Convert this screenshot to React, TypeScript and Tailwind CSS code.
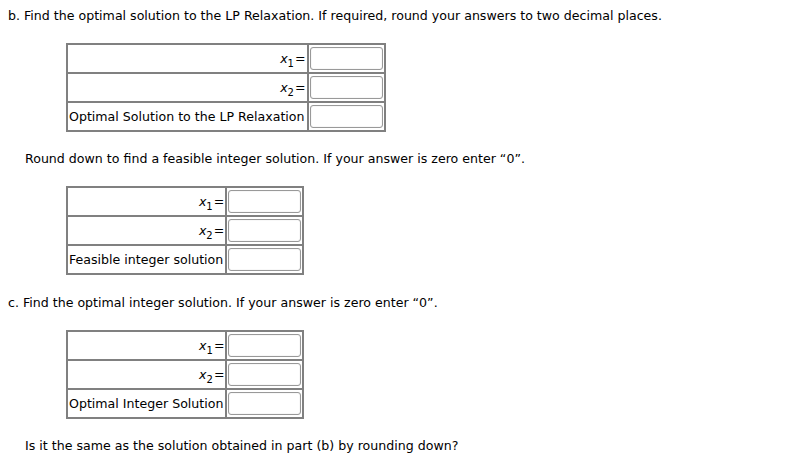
const Var = ({ n }: { n: number }) => (
  <span>
    <i>x</i>
    <sub className="text-[10px] align-[-2px]">{n}</sub>
    <span className="ml-[1px]">=</span>
  </span>
);

const Box = () => (
  <input
    type="text"
    className="block w-[73px] h-[23px] rounded-[3px] border border-[#999] bg-white shadow-[inset_0_0_1px_#bbb] outline-none"
  />
);

const Row = ({ label }: { label: React.ReactNode }) => (
  <tr>
    <td className="border-2 border-[#808080] h-[29px] px-[1px] text-right align-middle whitespace-nowrap">
      {label}
    </td>
    <td className="border-2 border-[#808080] p-[1px] align-middle">
      <Box />
    </td>
  </tr>
);

const AnswerTable = ({ last }: { last: string }) => (
  <table className="border-collapse ml-[66px]">
    <tbody>
      <Row label={<Var n={1} />} />
      <Row label={<Var n={2} />} />
      <tr>
        <td className="border-2 border-[#808080] h-[29px] pl-[1px] pr-[2px] text-left align-middle whitespace-nowrap">
          {last}
        </td>
        <td className="border-2 border-[#808080] p-[1px] align-middle">
          <Box />
        </td>
      </tr>
    </tbody>
  </table>
);

export default function App() {
  return (
    <div
      className="w-[796px] h-[462px] bg-white text-black text-[12.6px] leading-[16px] overflow-hidden"
      style={{ fontFamily: '"DejaVu Sans", Verdana, sans-serif' }}
    >
      <p className="pl-[8px] pt-[8px]">
        b. Find the optimal solution to the LP Relaxation. If required, round your answers to two decimal places.
      </p>
      <div className="mt-[19px]">
        <AnswerTable last="Optimal Solution to the LP Relaxation" />
      </div>
      <p className="pl-[25px] mt-[19px]">
        Round down to find a feasible integer solution. If your answer is zero enter “0”.
      </p>
      <div className="mt-[19px]">
        <AnswerTable last="Feasible integer solution" />
      </div>
      <p className="pl-[8px] mt-[20px]">
        c. Find the optimal integer solution. If your answer is zero enter “0”.
      </p>
      <div className="mt-[19px]">
        <AnswerTable last="Optimal Integer Solution" />
      </div>
      <p className="pl-[25px] mt-[19px]">
        Is it the same as the solution obtained in part (b) by rounding down?
      </p>
    </div>
  );
}
